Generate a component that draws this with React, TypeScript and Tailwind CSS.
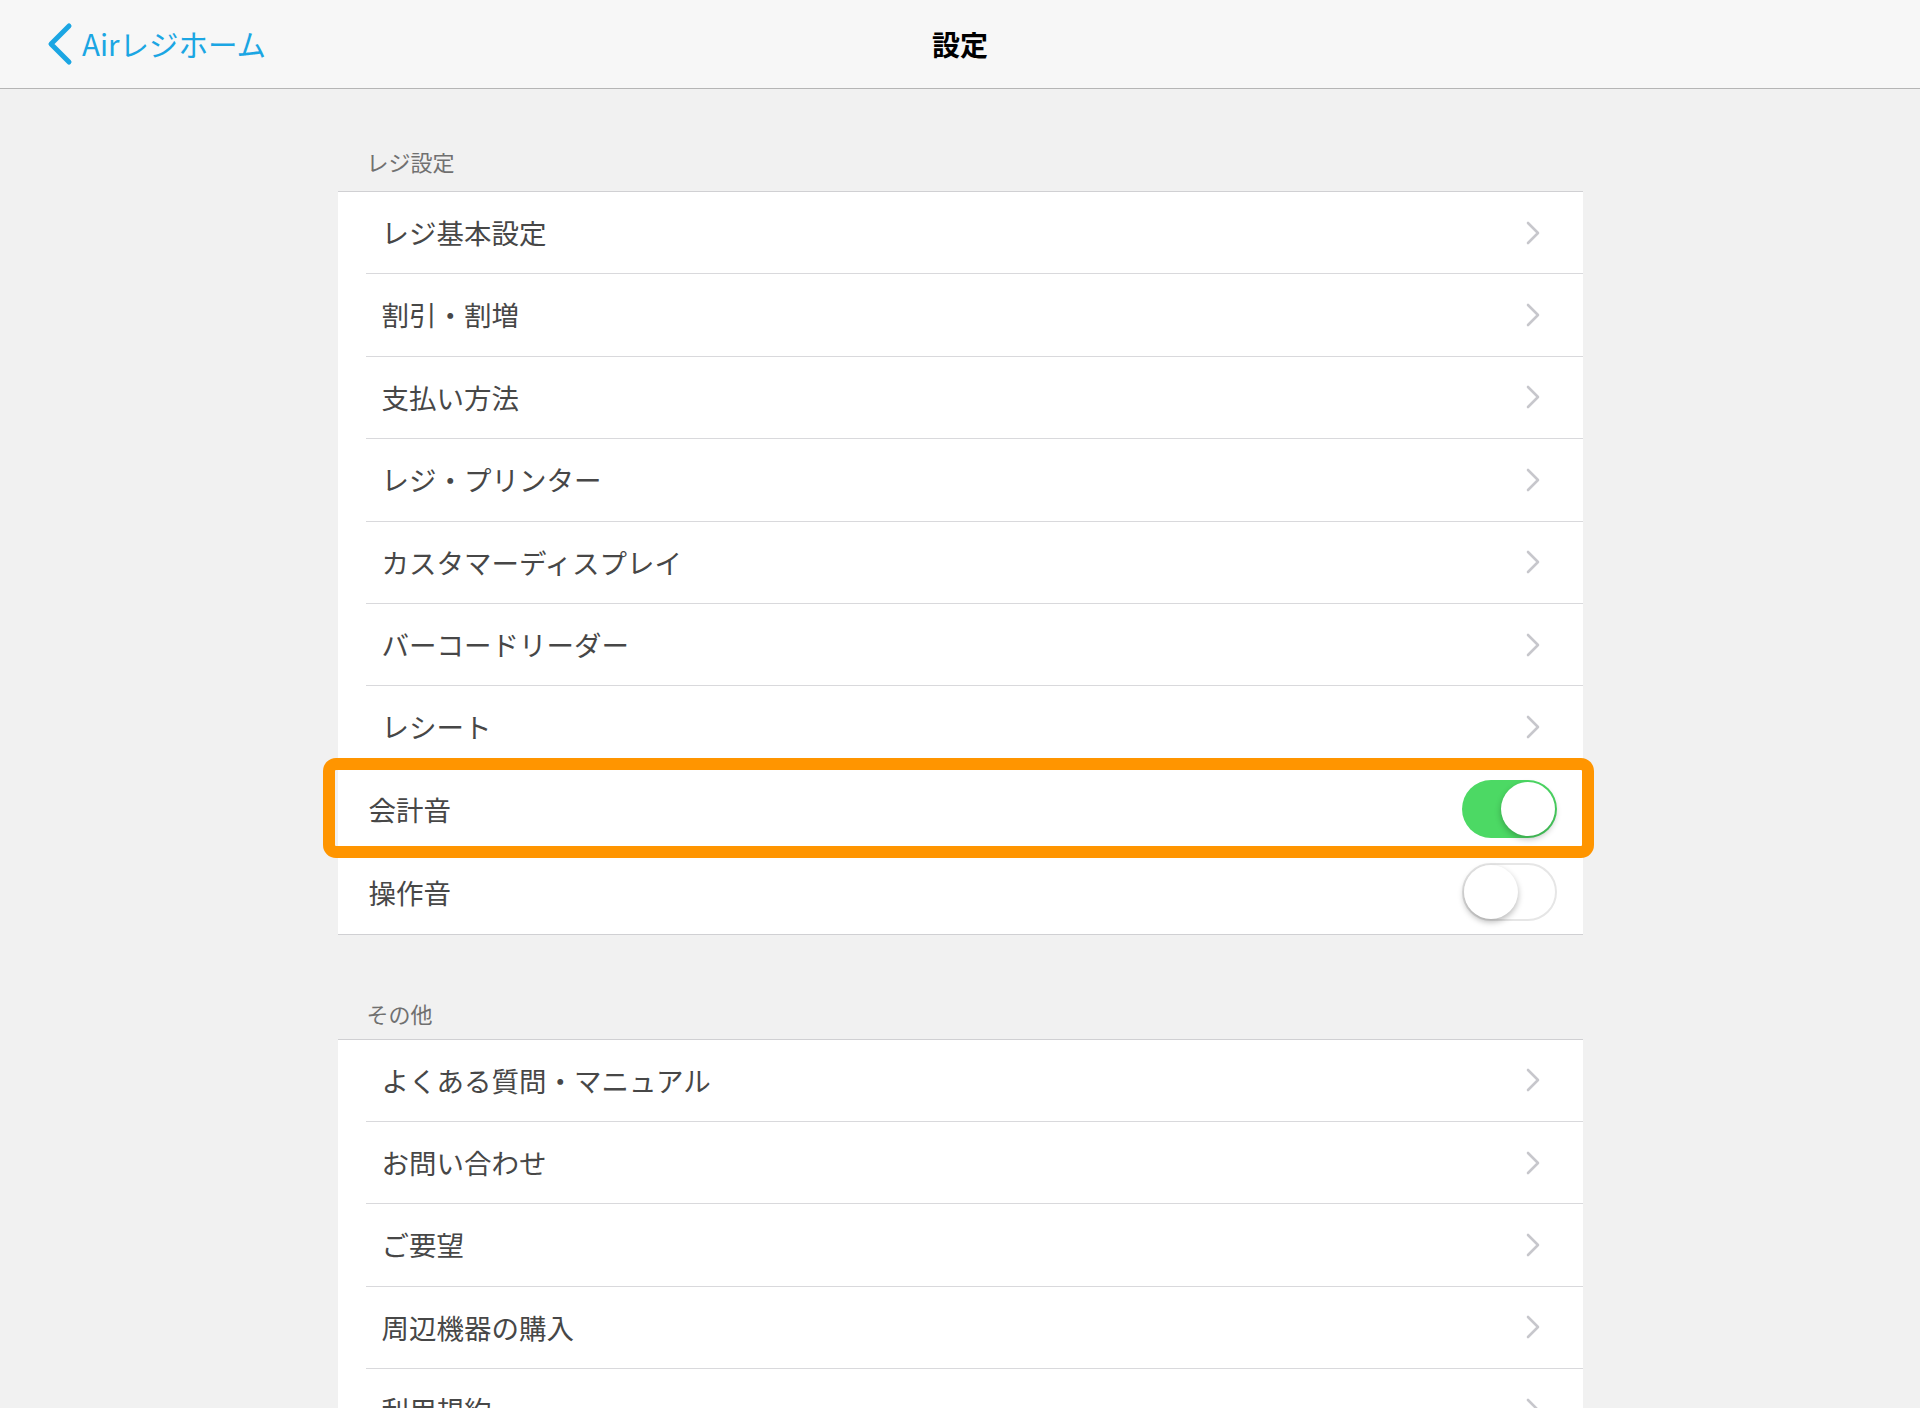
type NavRowProps = { label: string; last?: boolean }

function Chevron() {
  return (
    <svg width="14" height="24" viewBox="0 0 14 24" fill="none" aria-hidden>
      <path d="M2 2l10 10L2 22" stroke="#c7c7cc" strokeWidth="2.6" strokeLinecap="round" strokeLinejoin="round" />
    </svg>
  )
}

function NavRow({ label, last }: NavRowProps) {
  return (
    <div className="pl-[28px]">
      <div
        className={`flex h-[82.4px] items-center justify-between pr-[43px] ${last ? '' : 'border-b border-[#d9d9dc]'}`}
      >
        <span className="pl-[16px] text-[27.5px] text-[#474747]">{label}</span>
        <Chevron />
      </div>
    </div>
  )
}

function Toggle({ on }: { on: boolean }) {
  return on ? (
    <div className="relative h-[58px] w-[95px] rounded-full bg-[#4cd964]">
      <div className="absolute right-[2px] top-[2px] h-[54px] w-[54px] rounded-full bg-white shadow-[0_3px_6px_rgba(0,0,0,0.25)]" />
    </div>
  ) : (
    <div className="relative h-[58px] w-[95px] rounded-full border-2 border-[#e6e6e6] bg-white">
      <div className="absolute left-0 top-0 h-[54px] w-[54px] rounded-full bg-white shadow-[0_3px_6px_rgba(0,0,0,0.28)]" />
    </div>
  )
}

function ToggleRow({ label, on, last, highlight }: { label: string; on: boolean; last?: boolean; highlight?: boolean }) {
  return (
    <div className="relative pl-[28px]">
      <div
        className={`flex h-[82.4px] items-center justify-between pr-[26px] ${last ? '' : 'border-b border-[#d9d9dc]'}`}
      >
        <span className="pl-[3px] text-[27.5px] text-[#474747]">{label}</span>
        <Toggle on={on} />
      </div>
      {highlight && (
        <div className="pointer-events-none absolute bottom-[-7px] left-[-15px] right-[-11px] top-[-11px] rounded-[13px] border-[12px] border-[#ff9500]" />
      )}
    </div>
  )
}

export default function App() {
  const regi = ['レジ基本設定', '割引・割増', '支払い方法', 'レジ・プリンター', 'カスタマーディスプレイ', 'バーコードリーダー', 'レシート']
  const other = ['よくある質問・マニュアル', 'お問い合わせ', 'ご要望', '周辺機器の購入', '利用規約', 'プライバシーポリシー']

  return (
    <div
      className="h-[1408px] w-[1920px] overflow-hidden bg-[#f1f1f1]"
      style={{ fontFamily: '"Noto Sans CJK JP", "Noto Sans", sans-serif' }}
    >
      <header className="relative flex h-[89px] items-center justify-center border-b border-[#b5b5b5] bg-[#f7f7f7]">
        <div className="absolute left-[45px] top-0 flex h-[88px] items-center gap-[9px] text-[#1ba6e3]">
          <svg width="28" height="44" viewBox="0 0 28 44" fill="none" aria-hidden>
            <path d="M24 4L6 22l18 18" stroke="#1ba6e3" strokeWidth="5" strokeLinecap="round" strokeLinejoin="round" />
          </svg>
          <span className="text-[29.5px] leading-none">Airレジホーム</span>
        </div>
        <h1 className="text-[28px] font-bold text-black">設定</h1>
      </header>

      <main className="mx-auto w-[1245px]">
        <section className="pt-[57px]">
          <p className="mb-[15px] pl-[29px] text-[22px] leading-[30px] text-[#707070]">レジ設定</p>
          <div className="border-y border-[#d0d0d3] bg-white">
            {regi.map((l) => (
              <NavRow key={l} label={l} />
            ))}
            <ToggleRow label="会計音" on highlight />
            <ToggleRow label="操作音" on={false} last />
          </div>
        </section>

        <section className="pt-[63px]">
          <p className="mb-[11px] pl-[29px] text-[22px] leading-[30px] text-[#707070]">その他</p>
          <div className="border-y border-[#d0d0d3] bg-white">
            {other.map((l, i) => (
              <NavRow key={l} label={l} last={i === other.length - 1} />
            ))}
          </div>
        </section>
      </main>
    </div>
  )
}
